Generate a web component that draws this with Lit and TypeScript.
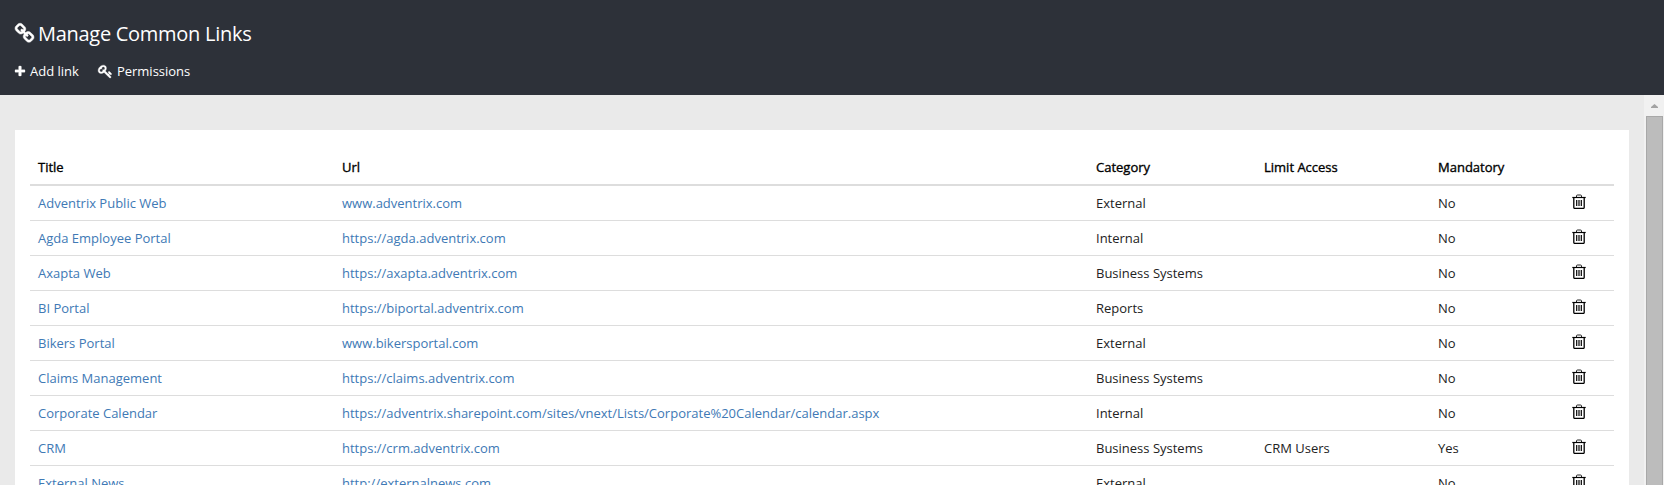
import { LitElement, html, css, svg } from "lit";
import { customElement } from "lit/decorators.js";

interface LinkRow {
  title: string;
  url: string;
  category: string;
  access?: string;
  mandatory: string;
}

const LINKS: LinkRow[] = [
  { title: "Adventrix Public Web", url: "www.adventrix.com", category: "External", mandatory: "No" },
  { title: "Agda Employee Portal", url: "https://agda.adventrix.com", category: "Internal", mandatory: "No" },
  { title: "Axapta Web", url: "https://axapta.adventrix.com", category: "Business Systems", mandatory: "No" },
  { title: "BI Portal", url: "https://biportal.adventrix.com", category: "Reports", mandatory: "No" },
  { title: "Bikers Portal", url: "www.bikersportal.com", category: "External", mandatory: "No" },
  { title: "Claims Management", url: "https://claims.adventrix.com", category: "Business Systems", mandatory: "No" },
  { title: "Corporate Calendar", url: "https://adventrix.sharepoint.com/sites/vnext/Lists/Corporate%20Calendar/calendar.aspx", category: "Internal", mandatory: "No" },
  { title: "CRM", url: "https://crm.adventrix.com", category: "Business Systems", access: "CRM Users", mandatory: "Yes" },
  { title: "External News", url: "http://externalnews.com", category: "External", mandatory: "No" },
];

const CHAIN = svg`<path d="M1520 1216q0-40-28-68l-208-208q-28-28-68-28-42 0-72 32 3 3 19 18.5t21.5 21.5 15 19 13 25.5 3.5 27.5q0 40-28 68t-68 28q-15 0-27.5-3.5t-25.5-13-19-15-21.5-21.5-18.5-19q-33 31-33 73 0 40 28 68l206 207q27 27 68 27 40 0 68-26l147-146q28-28 28-67zm-703-705q0-40-28-68l-206-207q-28-28-68-28-39 0-68 27l-147 146q-28 28-28 67 0 40 28 68l208 208q27 27 68 27 42 0 72-31-3-3-19-18.5t-21.5-21.5-15-19-13-25.5-3.5-27.5q0-40 28-68t68-28q15 0 27.5 3.5t25.5 13 19 15 21.5 21.5 18.5 19q33-31 33-73zm895 705q0 120-85 203l-147 146q-83 83-203 83-121 0-204-85l-206-207q-83-83-83-203 0-123 88-209l-88-88q-86 88-208 88-120 0-204-84l-208-208q-84-84-84-204t85-203l147-146q83-83 203-83 121 0 204 85l206 207q83 83 83 203 0 123-88 209l88 88q86-88 208-88 120 0 204 84l208 208q84 84 84 204z"/>`;
const PLUS = svg`<path d="M1600 736v192q0 40-28 68t-68 28h-416v416q0 40-28 68t-68 28h-192q-40 0-68-28t-28-68v-416h-416q-40 0-68-28t-28-68v-192q0-40 28-68t68-28h416v-416q0-40 28-68t68-28h192q40 0 68 28t28 68v416h416q40 0 68 28t28 68z"/>`;
const KEY = svg`<path d="M832 512q0-80-56-136t-136-56-136 56-56 136q0 42 19 83-41-19-83-19-80 0-136 56t-56 136 56 136 136 56 136-56 56-136q0-42-19-83 41 19 83 19 80 0 136-56t56-136zm851 704q0 17-49 66t-66 49q-9 0-28.5-16t-36.5-33-38.5-40-24.5-26l-96 96 220 220q28 28 28 68 0 42-39 81t-81 39q-40 0-68-28l-671-671q-176 131-365 131-163 0-265.5-102.5t-102.5-265.5q0-160 95-313t248-248 313-95q163 0 265.5 102.5t102.5 265.5q0 189-131 365l355 355 96-96q-3-3-26-24.5t-40-38.5-33-36.5-16-28.5q0-17 49-66t66-49q13 0 23 10 6 6 46 44.5t82 79.5 86.5 86 73 78 28.5 41z"/>`;

@customElement("app-header")
class AppHeader extends LitElement {
  static styles = css`
    :host {
      display: block;
      height: 95px;
      box-sizing: border-box;
      padding: 17px 15px 0;
      background: #2d3139;
      color: #fff;
    }
    .heading {
      display: flex;
      align-items: center;
      gap: 4px;
      height: 32px;
      margin: 0;
      font-size: 20px;
      font-weight: 400;
      letter-spacing: -0.28px;
      white-space: nowrap;
    }
    .actions {
      display: flex;
      gap: 20px;
      margin-top: 12px;
    }
    .action {
      display: flex;
      align-items: center;
      height: 20px;
      gap: 5px;
      font-size: 13px;
      white-space: nowrap;
    }
    svg { display: block; fill: currentColor; flex: none; stroke: currentColor; stroke-width: 40; }
    .chain { width: 19px; height: 19px; overflow: visible; }
    .plus { width: 10px; height: 10px; overflow: visible; }
    .key { width: 13px; height: 13px; overflow: visible; }
  `;
  render() {
    return html`
      <h1 class="heading"><svg class="chain" viewBox="80 80 1632 1632">${CHAIN}</svg><span>Manage Common Links</span></h1>
      <nav class="actions">
        <span class="action"><svg class="plus" viewBox="192 128 1408 1408">${PLUS}</svg>Add link</span>
        <span class="action"><svg class="key" viewBox="109 109 1600 1600">${KEY}</svg>Permissions</span>
      </nav>
    `;
  }
}

@customElement("link-table")
class LinkTable extends LitElement {
  static styles = css`
    :host { display: block; }
    .row {
      display: grid;
      grid-template-columns: 304px 754px 168px 174px 126px 1fr;
      height: 34px;
      border-bottom: 1px solid #ddd;
      align-items: center;
      line-height: 19px;
    }
    .cell { padding: 0 8px; white-space: nowrap; }
    .head { height: 39px; border-bottom-width: 2px; color: #000; }
    .head .cell { padding-top: 6px; -webkit-text-stroke: 0.35px #000; }
    .link { color: #4079b5; }
    .tool { padding: 0 0 4px 16px; }
    .trash { display: block; width: 14px; height: 15px; }
  `;
  render() {
    return html`
      <div class="row head">
        ${["Title", "Url", "Category", "Limit Access", "Mandatory"].map((h) => html`<div class="cell">${h}</div>`)}
      </div>
      ${LINKS.map(
        (r) => html`<div class="row">
          <div class="cell link">${r.title}</div>
          <div class="cell link">${r.url}</div>
          <div class="cell">${r.category}</div>
          <div class="cell">${r.access ?? ""}</div>
          <div class="cell">${r.mandatory}</div>
          <div class="tool">
            <svg class="trash" viewBox="0 0 14 15" fill="none" stroke="#000">
              <path d="M4.500 3V2Q4.500 1 5.500 1H8.500Q9.500 1 9.500 2V3" stroke="#222" />
              <path d="M.3 3.500H13.700" stroke-width="1.200" />
              <path d="M1.800 3.500V13.400Q1.800 14.400 2.800 14.400H11.200Q12.200 14.400 12.200 13.400V3.500" stroke-width="1.300" />
              <path d="M4.700 6V12M7 6V12M9.300 6V12" stroke-width="1.200" />
            </svg>
          </div>
        </div>`
      )}
    `;
  }
}

@customElement("app-root")
class AppRoot extends LitElement {
  static styles = css`
    :host {
      display: flex;
      flex-direction: column;
      height: 485px;
      overflow: hidden;
      background: #eaeaea;
      color: #222;
      font-family: "Open Sans", sans-serif;
      font-size: 13px;
    }
    .body { display: flex; flex: 1; min-height: 0; }
    .content { flex: 1; padding: 35px 15px 0; overflow: hidden; }
    .panel { background: #fff; padding: 15px 15px 0; height: 400px; }
    .scrollbar {
      width: 20px;
      box-sizing: border-box;
      padding: 0 1px 0 2px;
      background: #f1f1f1;
      display: flex;
      flex-direction: column;
    }
    .arrow { display: block; width: 17px; height: 21px; }
    .thumb { flex: 1; background: #bcbcbc; border: 1px solid #a8a8a8; border-bottom: 0; }
  `;
  render() {
    return html`
      <app-header></app-header>
      <div class="body">
        <div class="content"><div class="panel"><link-table></link-table></div></div>
        <div class="scrollbar">
          <svg class="arrow" viewBox="0 0 17 21"><path d="M5 13V12L8.500 9L12 12V13Z" fill="#a3a3a3" /></svg>
          <div class="thumb"></div>
        </div>
      </div>
    `;
  }
}
